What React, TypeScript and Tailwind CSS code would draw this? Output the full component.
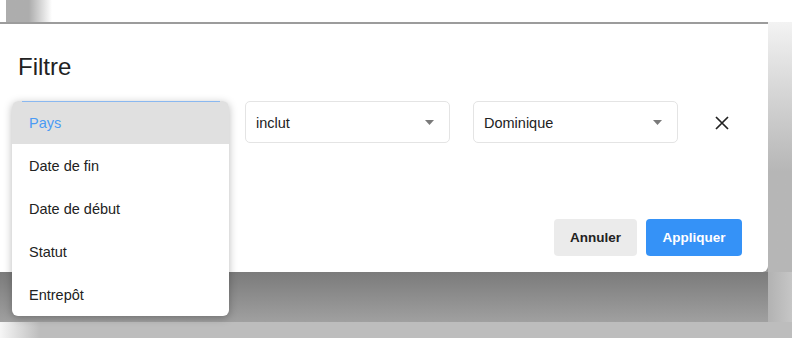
import React from "react";

const fields = ["Pays", "Date de fin", "Date de début", "Statut", "Entrepôt"];

const Caret = () => (
  <svg width="9" height="5" viewBox="0 0 9 5" className="shrink-0">
    <path d="M0 0h9L4.5 5z" fill="#7a7a7a" />
  </svg>
);

const SelectBox: React.FC<{ value: string }> = ({ value }) => (
  <div className="flex h-[42px] w-[205px] items-center justify-between rounded-[5px] border border-[#e4e4e4] bg-white pl-[10px] pr-[15px]">
    <span className="pt-[4px] text-[14.5px] text-[#222]">{value}</span>
    <Caret />
  </div>
);

const App: React.FC = () => {
  return (
    <div className="relative flex h-[338px] w-[792px] flex-col overflow-hidden bg-[#bcbcbc] font-['Liberation_Sans',Arial,sans-serif] text-[#222]">
      <div className="flex h-[22px] bg-white">
        <div className="ml-[6px] w-[46px] bg-gradient-to-r from-[#adadad] from-50% to-white" />
      </div>

      <div className="flex h-[250px] bg-[#9a9a9a]">
        <div className="flex w-[768px] flex-col">
          <div className="h-[2px] bg-[#9c9c9c]" />
          <div className="flex flex-1 flex-col rounded-br-[6px] bg-white pl-[18px] pr-[26px] pt-[29px]">
            <h2 className="h-[28px] text-[24px] leading-[28px] text-[#222]">Filtre</h2>
            <div className="mt-[20px] flex items-center">
              <SelectBox value="Pays" />
              <div className="ml-[22px]">
                <SelectBox value="inclut" />
              </div>
              <div className="ml-[23px]">
                <SelectBox value="Dominique" />
              </div>
              <svg width="14" height="14" viewBox="0 0 14 14" className="ml-[37px] mt-[2px]">
                <path d="M1 1l12 12M13 1L1 13" stroke="#222" strokeWidth="1.7" />
              </svg>
            </div>
            <div className="mt-[76px] flex justify-end gap-[9px]">
              <button className="h-[37px] w-[83px] rounded-[4px] bg-[#ebebeb] pt-[1px] text-[13.5px] font-bold text-[#222]">
                Annuler
              </button>
              <button className="h-[37px] w-[96px] rounded-[4px] bg-[#3592f7] pt-[1px] text-[13.5px] font-bold text-white">
                Appliquer
              </button>
            </div>
          </div>
        </div>
        <div className="flex-1 bg-gradient-to-b from-[#f3f3f3] to-[#b6b6b6] to-60%" />
      </div>

      <div className="flex h-[50px]">
        <div className="w-[768px] bg-gradient-to-b from-[#7b7b7b] to-[#a0a0a0]" />
        <div className="flex-1 bg-gradient-to-r from-[#b2b2b2] to-[#c6c6c6]" />
      </div>

      <div className="flex-1 bg-[linear-gradient(to_right,#f6f6f6,#bdbdbd_40px)]" />

      <div className="absolute left-[12px] top-[101px] w-[217px] overflow-hidden rounded-[6px] bg-white shadow-[0_2px_8px_rgba(0,0,0,0.28)]">
        <div className="absolute left-[10px] right-[9px] top-0 h-px bg-[#8ab8f0]" />
        {fields.map((f, i) => (
          <div
            key={f}
            className={
              i === 0
                ? "flex h-[43px] items-center bg-[#e0e0e0] pl-[17px] pt-[3px] text-[14.5px] text-[#4b9bf4]"
                : "flex h-[43px] items-center pl-[17px] pt-[3px] text-[14.5px] text-[#222]"
            }
          >
            {f}
          </div>
        ))}
      </div>
    </div>
  );
};

export default App;
